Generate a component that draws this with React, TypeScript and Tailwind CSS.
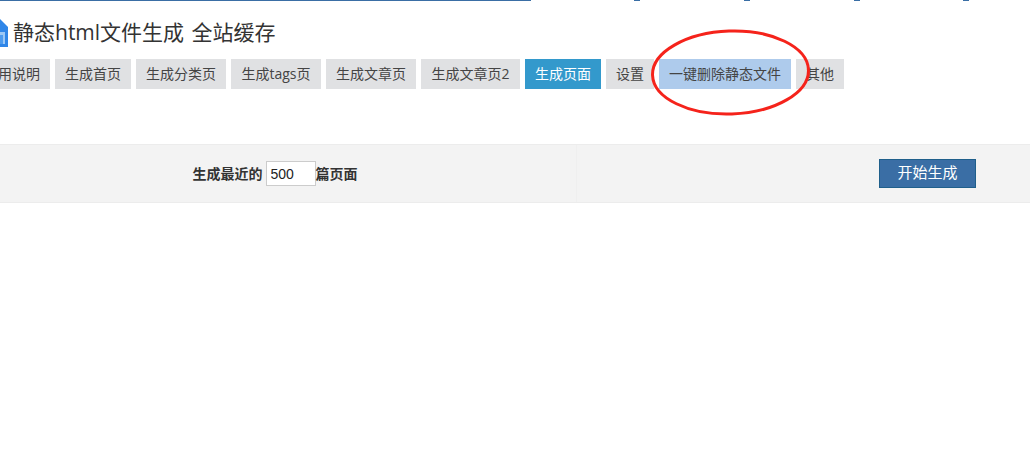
const tabs = [
  { name: '使用说明', cls: 'w-[76px] bg-[#e0e1e3] text-[#444]' },
  { name: '生成首页', cls: 'w-[76px] bg-[#e0e1e3] text-[#444]' },
  { name: '生成分类页', cls: 'w-[90px] bg-[#e0e1e3] text-[#444]' },
  { name: '生成tags页', cls: 'w-[90px] bg-[#e0e1e3] text-[#444]' },
  { name: '生成文章页', cls: 'w-[90px] bg-[#e0e1e3] text-[#444]' },
  { name: '生成文章页2', cls: 'w-[99px] bg-[#e0e1e3] text-[#444]' },
  { name: '生成页面', cls: 'w-[76px] bg-[#3399cc] text-white' },
  { name: '设置', cls: 'w-[48px] bg-[#e0e1e3] text-[#444]' },
  { name: '一键删除静态文件', cls: 'w-[132px] bg-[#aecbec] text-[#444]' },
  { name: '其他', cls: 'w-[48px] bg-[#e0e1e3] text-[#444]' },
];

export default function App() {
  return (
    <div className="relative h-[472px] w-[1030px] overflow-hidden bg-white font-['Open_Sans','Noto_Sans_CJK_SC',sans-serif] text-[#333]">
      <div className="flex h-px items-start">
        <div className="h-px w-[531px] bg-[#3a6ea5]"></div>
        <div className="ml-[103px] h-px w-[6px] bg-[#3a6ea5]"></div>
        <div className="ml-[104px] h-px w-[6px] bg-[#3a6ea5]"></div>
        <div className="ml-[104px] h-px w-[6px] bg-[#3a6ea5]"></div>
        <div className="ml-[103px] h-px w-[6px] bg-[#3a6ea5]"></div>
      </div>

      <div className="ml-[-14px] mt-[17px] flex h-[30px] items-center gap-[5px]">
        <svg width="22" height="30" viewBox="0 0 22 30" className="shrink-0">
          <path d="M13 0 L22 9 V29 H1 V9 Z" fill="#2f86e8" />
          <rect x="7" y="14" width="12" height="12" fill="#9cc8f5" />
          <rect x="10" y="17" width="7" height="9" fill="#4d9bee" />
        </svg>
        <h1 className="mb-[2px] text-[21px] leading-[28px] font-normal whitespace-nowrap [word-spacing:2px]">静态html文件生成 全站缓存</h1>
      </div>

      <div className="ml-[-26px] mt-[11px] flex gap-[5px]">
        {tabs.map((t) => (
          <a key={t.name} className={`h-[30px] shrink-0 text-center text-[14px] leading-[29px] whitespace-nowrap ${t.cls}`}>{t.name}</a>
        ))}
      </div>

      <div className="ml-[-26px] mt-[55px] flex h-[59px] w-[1056px] border-y border-[#ececec] bg-[#f3f3f3]">
        <div className="flex w-[603px] items-center justify-center border-r border-[#efefef] text-[14px] leading-[23px] font-bold text-[#333]">
          <span className="pb-[1px]">生成最近的</span>
          <input readOnly value="500" className="ml-[3px] h-[25px] w-[50px] border border-[#cccccc] bg-white pl-[4px] font-['Liberation_Sans',sans-serif] text-[14px] font-normal text-[#222] outline-none" />
          <span className="pb-[1px]">篇页面</span>
        </div>
        <div className="flex flex-1 items-center justify-end pr-[54px]">
          <button className="h-[29px] w-[97px] border border-[#1f5f8b] bg-[#3a6ea5] pb-[2px] text-[15px] leading-[25px] text-white">开始生成</button>
        </div>
      </div>

      <svg className="pointer-events-none absolute left-[645px] top-[22px]" width="170" height="100" viewBox="0 0 170 100">
        <ellipse cx="85.5" cy="50.5" rx="78" ry="41.5" fill="none" stroke="#f5231b" strokeWidth="3" transform="rotate(-2 85.5 50.5)" />
      </svg>
    </div>
  );
}
